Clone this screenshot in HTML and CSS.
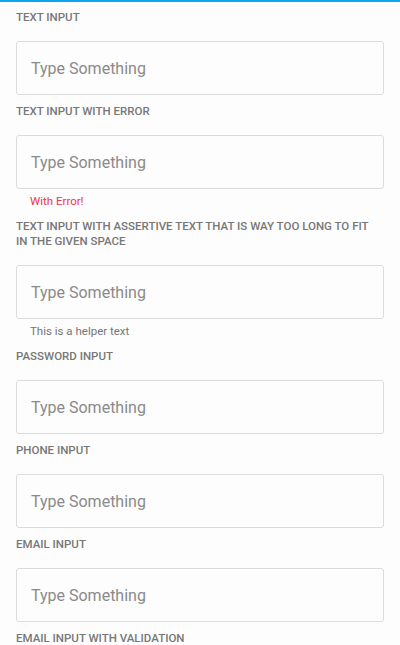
FILE: index.html
```html
<!DOCTYPE html>
<html>
<head>
<meta charset="utf-8">
<link rel="stylesheet" href="styles.css">
</head>
<body>
<div class="page">
  <div class="field">
    <div class="label">Text Input</div>
    <div class="input"><span class="placeholder">Type Something</span></div>
  </div>
  <div class="field">
    <div class="label">Text Input with Error</div>
    <div class="input"><span class="placeholder">Type Something</span></div>
    <div class="helper error">With Error!</div>
  </div>
  <div class="field">
    <div class="label">Text Input with assertive text that is way too long to fit in the given space</div>
    <div class="input"><span class="placeholder">Type Something</span></div>
    <div class="helper">This is a helper text</div>
  </div>
  <div class="field">
    <div class="label">Password Input</div>
    <div class="input"><span class="placeholder">Type Something</span></div>
  </div>
  <div class="field">
    <div class="label">Phone Input</div>
    <div class="input"><span class="placeholder">Type Something</span></div>
  </div>
  <div class="field">
    <div class="label">Email Input</div>
    <div class="input"><span class="placeholder">Type Something</span></div>
  </div>
  <div class="field">
    <div class="label">Email Input with Validation</div>
    <div class="input"><span class="placeholder">Type Something</span></div>
  </div>
</div>
</body>
</html>
```

FILE: styles.css
```css
html, body {
  margin: 0;
  padding: 0;
  background: #fdfdfd;
  font-family: Roboto, "Noto Sans", sans-serif;
}
.page {
  border-top: 2px solid #0ba6f0;
  padding: 0 16px;
  overflow: hidden;
  height: 643px;
}
.field {
  display: flex;
  flex-direction: column;
}
.label {
  margin: 9px 0 16px;
  padding-right: 8px;
  font-size: 11.5px;
  line-height: 15px;
  font-weight: 500;
  text-transform: uppercase;
  color: #777777;
}
.field:first-child .label {
  margin-top: 8px;
}
.input {
  height: 52px;
  border: 1px solid #dcdcdc;
  border-radius: 3px;
  background: #fdfdfd;
  display: flex;
  align-items: center;
  padding: 0 14px;
}
.placeholder {
  font-size: 16px;
  color: #8a8a8a;
}
.helper {
  margin: 5px 0 1px;
  padding-left: 14px;
  font-size: 11.5px;
  line-height: 15px;
  color: #757575;
}
.helper.error {
  color: #f0344c;
}
```
